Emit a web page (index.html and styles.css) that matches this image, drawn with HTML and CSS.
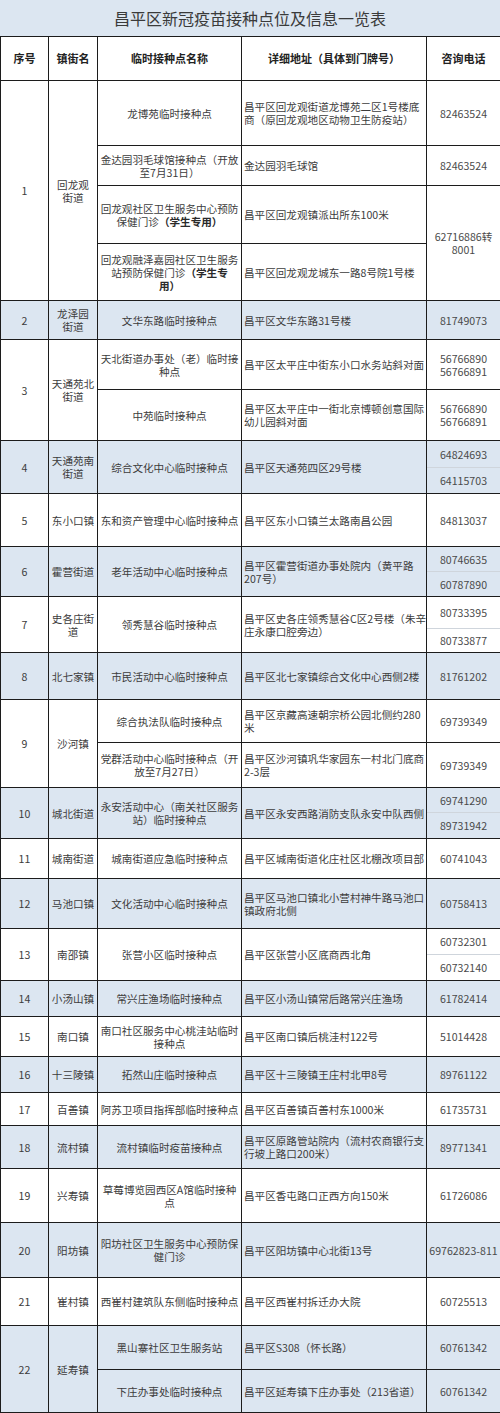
FILE: index.html
```html
<!DOCTYPE html>
<html lang="zh-CN">
<head>
<meta charset="utf-8">
<title>昌平区新冠疫苗接种点位及信息一览表</title>
<link rel="stylesheet" href="styles.css">
</head>
<body>
<div class="title">昌平区新冠疫苗接种点位及信息一览表</div>
<table class="sheet">
  <colgroup>
    <col class="c1"><col class="c2"><col class="c3"><col class="c4"><col class="c5">
  </colgroup>
  <thead>
    <tr class="r-head">
      <th>序号</th><th>镇街名</th><th>临时接种点名称</th><th>详细地址（具体到门牌号）</th><th>咨询电话</th>
    </tr>
  </thead>
  <tbody>
    <tr class="r1a">
      <td rowspan="4">1</td><td rowspan="4">回龙观<br>街道</td>
      <td class="name">龙博苑临时接种点</td>
      <td class="addr">昌平区回龙观街道龙博苑二区1号楼底<br>商（原回龙观地区动物卫生防疫站）</td>
      <td class="tel">82463524</td>
    </tr>
    <tr class="r1b">
      <td class="name">金达园羽毛球馆接种点（开放<br>至7月31日）</td>
      <td class="addr">金达园羽毛球馆</td>
      <td class="tel">82463524</td>
    </tr>
    <tr class="r1c">
      <td class="name">回龙观社区卫生服务中心预防<br>保健门诊<b>（学生专用）</b></td>
      <td class="addr">昌平区回龙观镇派出所东100米</td>
      <td class="tel" rowspan="2">62716886转<br>8001</td>
    </tr>
    <tr class="r1d">
      <td class="name">回龙观融泽嘉园社区卫生服务<br>站预防保健门诊<b>（学生专<br>用）</b></td>
      <td class="addr">昌平区回龙观龙城东一路8号院1号楼</td>
    </tr>

    <tr class="alt r2">
      <td>2</td><td>龙泽园<br>街道</td>
      <td class="name">文华东路临时接种点</td>
      <td class="addr">昌平区文华东路31号楼</td>
      <td class="tel">81749073</td>
    </tr>

    <tr class="r3a">
      <td rowspan="2">3</td><td rowspan="2">天通苑北<br>街道</td>
      <td class="name">天北街道办事处（老）临时接<br>种点</td>
      <td class="addr">昌平区太平庄中街东小口水务站斜对面</td>
      <td class="tel">56766890<br>56766891</td>
    </tr>
    <tr class="r3b">
      <td class="name">中苑临时接种点</td>
      <td class="addr">昌平区太平庄中一街北京博顿创意国际<br>幼儿园斜对面</td>
      <td class="tel">56766890<br>56766891</td>
    </tr>

    <tr class="alt r4a">
      <td rowspan="2">4</td><td rowspan="2">天通苑南<br>街道</td>
      <td class="name" rowspan="2">综合文化中心临时接种点</td>
      <td class="addr" rowspan="2">昌平区天通苑四区29号楼</td>
      <td class="tel ptop">64824693</td>
    </tr>
    <tr class="alt r4b">
      <td class="tel pbot">64115703</td>
    </tr>

    <tr class="r5">
      <td>5</td><td>东小口镇</td>
      <td class="name">东和资产管理中心临时接种点</td>
      <td class="addr">昌平区东小口镇兰太路南昌公园</td>
      <td class="tel">84813037</td>
    </tr>

    <tr class="alt r6a">
      <td rowspan="2">6</td><td rowspan="2">霍营街道</td>
      <td class="name" rowspan="2">老年活动中心临时接种点</td>
      <td class="addr" rowspan="2">昌平区霍营街道办事处院内（黄平路<br>207号）</td>
      <td class="tel ptop">80746635</td>
    </tr>
    <tr class="alt r6b">
      <td class="tel pbot">60787890</td>
    </tr>

    <tr class="r7a">
      <td rowspan="2">7</td><td rowspan="2">史各庄街<br>道</td>
      <td class="name" rowspan="2">领秀慧谷临时接种点</td>
      <td class="addr" rowspan="2">昌平区史各庄领秀慧谷C区2号楼（朱辛<br>庄永康口腔旁边）</td>
      <td class="tel ptop">80733395</td>
    </tr>
    <tr class="r7b">
      <td class="tel pbot">80733877</td>
    </tr>

    <tr class="alt r8">
      <td>8</td><td>北七家镇</td>
      <td class="name">市民活动中心临时接种点</td>
      <td class="addr">昌平区北七家镇综合文化中心西侧2楼</td>
      <td class="tel">81761202</td>
    </tr>

    <tr class="r9a">
      <td rowspan="2">9</td><td rowspan="2">沙河镇</td>
      <td class="name">综合执法队临时接种点</td>
      <td class="addr">昌平区京藏高速朝宗桥公园北侧约280<br>米</td>
      <td class="tel">69739349</td>
    </tr>
    <tr class="r9b">
      <td class="name">党群活动中心临时接种点（开<br>放至7月27日）</td>
      <td class="addr">昌平区沙河镇巩华家园东一村北门底商<br>2-3层</td>
      <td class="tel">69739349</td>
    </tr>

    <tr class="alt r10a">
      <td rowspan="2">10</td><td rowspan="2">城北街道</td>
      <td class="name" rowspan="2">永安活动中心（南关社区服务<br>站）临时接种点</td>
      <td class="addr" rowspan="2">昌平区永安西路消防支队永安中队西侧</td>
      <td class="tel ptop">69741290</td>
    </tr>
    <tr class="alt r10b">
      <td class="tel pbot">89731942</td>
    </tr>

    <tr class="r11">
      <td>11</td><td>城南街道</td>
      <td class="name">城南街道应急临时接种点</td>
      <td class="addr">昌平区城南街道化庄社区北棚改项目部</td>
      <td class="tel">60741043</td>
    </tr>

    <tr class="alt r12">
      <td>12</td><td>马池口镇</td>
      <td class="name">文化活动中心临时接种点</td>
      <td class="addr">昌平区马池口镇北小营村神牛路马池口<br>镇政府北侧</td>
      <td class="tel">60758413</td>
    </tr>

    <tr class="r13a">
      <td rowspan="2">13</td><td rowspan="2">南邵镇</td>
      <td class="name" rowspan="2">张营小区临时接种点</td>
      <td class="addr" rowspan="2">昌平区张营小区底商西北角</td>
      <td class="tel ptop">60732301</td>
    </tr>
    <tr class="r13b">
      <td class="tel pbot">60732140</td>
    </tr>

    <tr class="alt r14">
      <td>14</td><td>小汤山镇</td>
      <td class="name">常兴庄渔场临时接种点</td>
      <td class="addr">昌平区小汤山镇常后路常兴庄渔场</td>
      <td class="tel">61782414</td>
    </tr>

    <tr class="r15">
      <td>15</td><td>南口镇</td>
      <td class="name">南口社区服务中心桃洼站临时<br>接种点</td>
      <td class="addr">昌平区南口镇后桃洼村122号</td>
      <td class="tel">51014428</td>
    </tr>

    <tr class="alt r16">
      <td>16</td><td>十三陵镇</td>
      <td class="name">拓然山庄临时接种点</td>
      <td class="addr">昌平区十三陵镇王庄村北甲8号</td>
      <td class="tel">89761122</td>
    </tr>

    <tr class="r17">
      <td>17</td><td>百善镇</td>
      <td class="name">阿苏卫项目指挥部临时接种点</td>
      <td class="addr">昌平区百善镇百善村东1000米</td>
      <td class="tel">61735731</td>
    </tr>

    <tr class="alt r18">
      <td>18</td><td>流村镇</td>
      <td class="name">流村镇临时疫苗接种点</td>
      <td class="addr">昌平区原路管站院内（流村农商银行支<br>行坡上路口200米）</td>
      <td class="tel">89771341</td>
    </tr>

    <tr class="r19">
      <td>19</td><td>兴寿镇</td>
      <td class="name">草莓博览园西区A馆临时接种<br>点</td>
      <td class="addr">昌平区香屯路口正西方向150米</td>
      <td class="tel">61726086</td>
    </tr>

    <tr class="alt r20">
      <td>20</td><td>阳坊镇</td>
      <td class="name">阳坊社区卫生服务中心预防保<br>健门诊</td>
      <td class="addr">昌平区阳坊镇中心北街13号</td>
      <td class="tel">69762823-811</td>
    </tr>

    <tr class="r21">
      <td>21</td><td>崔村镇</td>
      <td class="name">西崔村建筑队东侧临时接种点</td>
      <td class="addr">昌平区西崔村拆迁办大院</td>
      <td class="tel">60725513</td>
    </tr>

    <tr class="alt r22a">
      <td rowspan="2">22</td><td rowspan="2">延寿镇</td>
      <td class="name">黑山寨社区卫生服务站</td>
      <td class="addr">昌平区S308（怀长路）</td>
      <td class="tel">60761342</td>
    </tr>
    <tr class="alt r22b">
      <td class="name">下庄办事处临时接种点</td>
      <td class="addr">昌平区延寿镇下庄办事处（213省道）</td>
      <td class="tel">60761342</td>
    </tr>
  </tbody>
</table>
</body>
</html>
```

FILE: styles.css
```css
* {
  box-sizing: border-box;
}

body {
  margin: 0;
  width: 500px;
  background: #ffffff;
  font-family: "Noto Sans CJK SC", "Noto Sans", sans-serif;
  color: #3c3c3c;
}

.title {
  height: 36px;
  background: #dce6f1;
  display: flex;
  align-items: center;
  justify-content: center;
  font-size: 16px;
  color: #3a3a3a;
}

.sheet {
  width: 500px;
  border-collapse: collapse;
  table-layout: fixed;
  font-size: 10.6px;
  line-height: 13px;
}

.c1 { width: 48px; }
.c2 { width: 49px; }
.c3 { width: 144px; }
.c4 { width: 185px; }
.c5 { width: 74px; }

.sheet th,
.sheet td {
  border: 1.5px solid #1c1c1c;
  padding: 0 1px;
  text-align: center;
  vertical-align: middle;
  white-space: nowrap;
}

.sheet th {
  font-size: 11px;
  font-weight: bold;
  color: #222222;
}

.sheet td.addr {
  text-align: left;
  padding-left: 2px;
}

.sheet td.tel {
  color: #4a4a4a;
}

.sheet b {
  font-weight: bold;
  color: #2a2a2a;
}

.alt td {
  background: #dce6f1;
}

.sheet td.ptop {
  border-bottom: 1px solid #cfd5dc;
}

.sheet td.pbot {
  border-top: 1px solid #cfd5dc;
}

/* row heights */
.r-head { height: 44px; }
.r1a { height: 65px; }
.r1b { height: 40px; }
.r1c { height: 58px; }
.r1d { height: 57px; }
.r2 { height: 39px; }
.r3a { height: 50px; }
.r3b { height: 51px; }
.r4a { height: 27px; }
.r4b { height: 26px; }
.r5 { height: 53px; }
.r6a { height: 25px; }
.r6b { height: 25px; }
.r7a { height: 32px; }
.r7b { height: 24px; }
.r8 { height: 47px; }
.r9a { height: 43px; }
.r9b { height: 45px; }
.r10a { height: 25px; }
.r10b { height: 26px; }
.r11 { height: 40px; }
.r12 { height: 50px; }
.r13a { height: 26px; }
.r13b { height: 26px; }
.r14 { height: 36px; }
.r15 { height: 40px; }
.r16 { height: 36px; }
.r17 { height: 33px; }
.r18 { height: 43px; }
.r19 { height: 54px; }
.r20 { height: 55px; }
.r21 { height: 48px; }
.r22a { height: 44px; }
.r22b { height: 43px; }
```
